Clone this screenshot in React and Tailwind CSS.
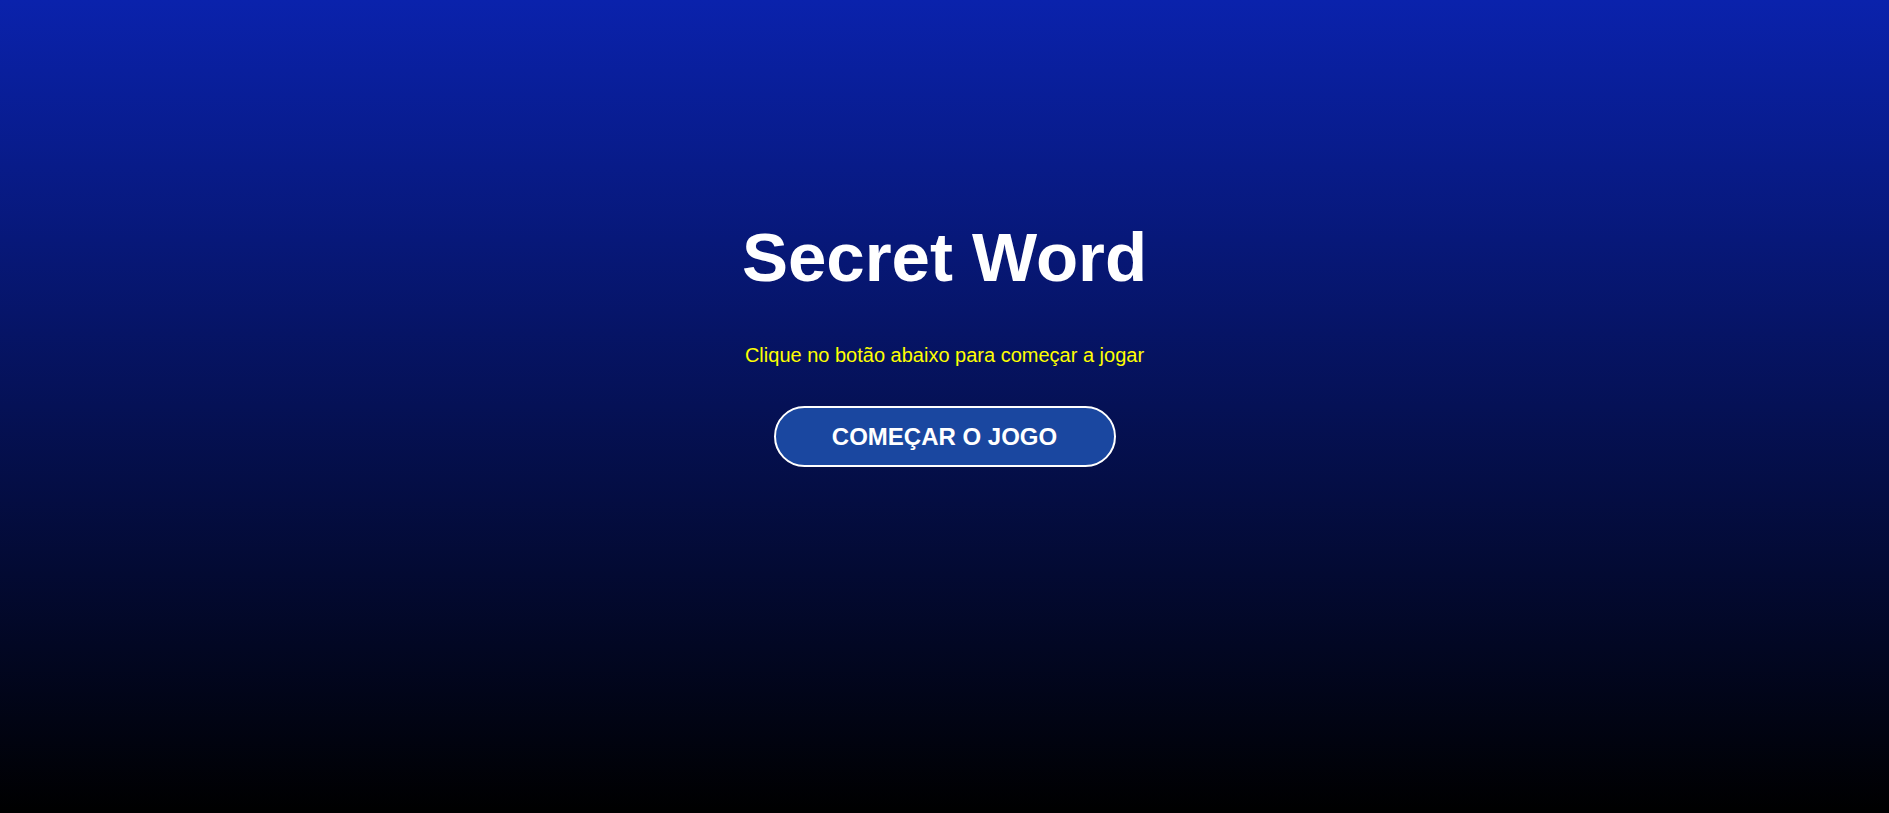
export default function App() {
  return (
    <div
      className="w-full h-[813px] flex flex-col items-center bg-[linear-gradient(180deg,#0a22ac_0%,#000000_100%)]"
      style={{ fontFamily: '"Liberation Sans", Arial, sans-serif' }}
    >
      <h1 className="mt-[223px] text-[69px] leading-[69px] font-bold text-white">Secret Word</h1>
      <p className="mt-[53px] text-[20px] leading-[20px] text-[#ffff00]">
        Clique no botão abaixo para começar a jogar
      </p>
      <button className="mt-[41px] w-[342px] h-[61px] rounded-full border-2 border-white bg-[#1a47a0] text-white font-bold text-[24px] leading-none">
        COMEÇAR O JOGO
      </button>
    </div>
  );
}
